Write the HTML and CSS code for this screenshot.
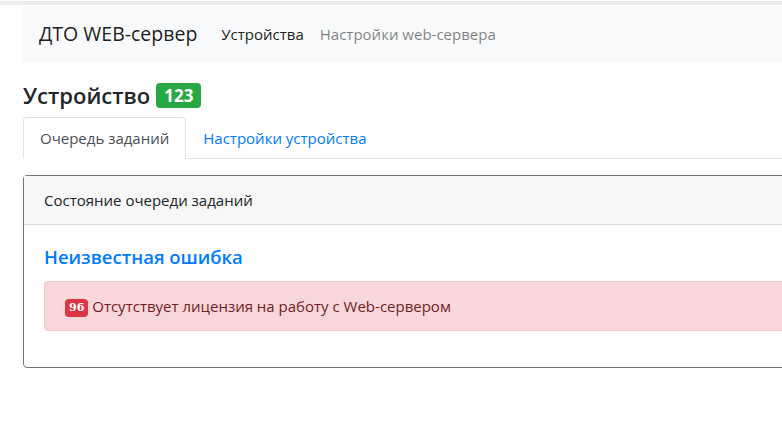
FILE: index.html
```html
<!DOCTYPE html>
<html lang="ru">
<head>
<meta charset="utf-8">
<title>ДТО WEB-сервер</title>
<link rel="stylesheet" href="styles.css">
</head>
<body>
<div class="topline"></div>
<div class="page">
  <nav class="navbar">
    <span class="brand">ДТО WEB-сервер</span>
    <a class="nav-link active">Устройства</a>
    <a class="nav-link">Настройки web-сервера</a>
  </nav>
  <h4 class="title">Устройство <span class="badge badge-success">123</span></h4>
  <div class="tabs">
    <a class="tab active">Очередь заданий</a>
    <a class="tab">Настройки устройства</a>
  </div>
  <div class="card">
    <div class="card-header">Состояние очереди заданий</div>
    <div class="card-body">
      <h5 class="error-title">Неизвестная ошибка</h5>
      <div class="alert"><span class="badge badge-danger">96</span> Отсутствует лицензия на работу с Web-сервером</div>
    </div>
  </div>
</div>
</body>
</html>
```
FILE: styles.css
```css
html, body {
  margin: 0;
  padding: 0;
  background: #fff;
  overflow: hidden;
}
body {
  font-family: "Open Sans", "Noto Sans", sans-serif;
  font-size: 15px;
  line-height: 24px;
  color: #212529;
}
.topline {
  margin-top: 1px;
  height: 4px;
  background: #ededed;
  margin-bottom: 1px;
}
.page {
  padding-left: 23px;
  width: 1100px;
}
.navbar {
  display: flex;
  align-items: center;
  background: #f8f9fa;
  padding: 8px 16px;
  height: 40px;
}
.brand {
  font-size: 19.5px;
  line-height: 30px;
  color: rgba(0,0,0,.9);
  margin-right: 16px;
}
.nav-link {
  padding: 8px;
  color: rgba(0,0,0,.5);
}
.nav-link.active {
  color: rgba(0,0,0,.9);
}
.title {
  margin: 21px 0 9px;
  height: 25px;
  font-size: 22px;
  line-height: 25px;
  font-weight: 600;
  display: flex;
  align-items: center;
  gap: 6px;
}
.badge {
  display: inline-block;
  color: #fff;
  font-weight: 700;
  border-radius: 4px;
  text-align: center;
}
.badge-success {
  background: #28a745;
  font-size: 17px;
  line-height: 25px;
  height: 25px;
  padding: 0 8px;
}
.tabs {
  display: flex;
  border-bottom: 1px solid #dee2e6;
  margin-bottom: 16px;
}
.tab {
  padding: 8px 16px;
  margin-bottom: -1px;
  border: 1px solid transparent;
  border-radius: 4px 4px 0 0;
  color: #007bff;
}
.tab.active {
  color: #495057;
  background: #fff;
  border-color: #dee2e6 #dee2e6 #fff;
}
.card {
  border: 1px solid #6c757d;
  border-radius: 4px;
}
.card-header {
  padding: 12px 20px;
  background: #f7f7f7;
  border-bottom: 1px solid #d9d9d9;
}
.card-body {
  padding: 20px;
}
.error-title {
  margin: 0 0 12px;
  font-size: 18.5px;
  line-height: 24px;
  font-weight: 600;
  color: #007bff;
}
.alert {
  background: #f8d7da;
  border: 1px solid #f5c6cb;
  color: #721c24;
  border-radius: 4px;
  padding: 12px 20px;
  margin-bottom: 16px;
}
.badge-danger {
  background: #dc3545;
  font-family: "DejaVu Serif", serif;
  font-size: 11px;
  line-height: 12px;
  padding: 3px 4px;
  vertical-align: 1px;
}
```
